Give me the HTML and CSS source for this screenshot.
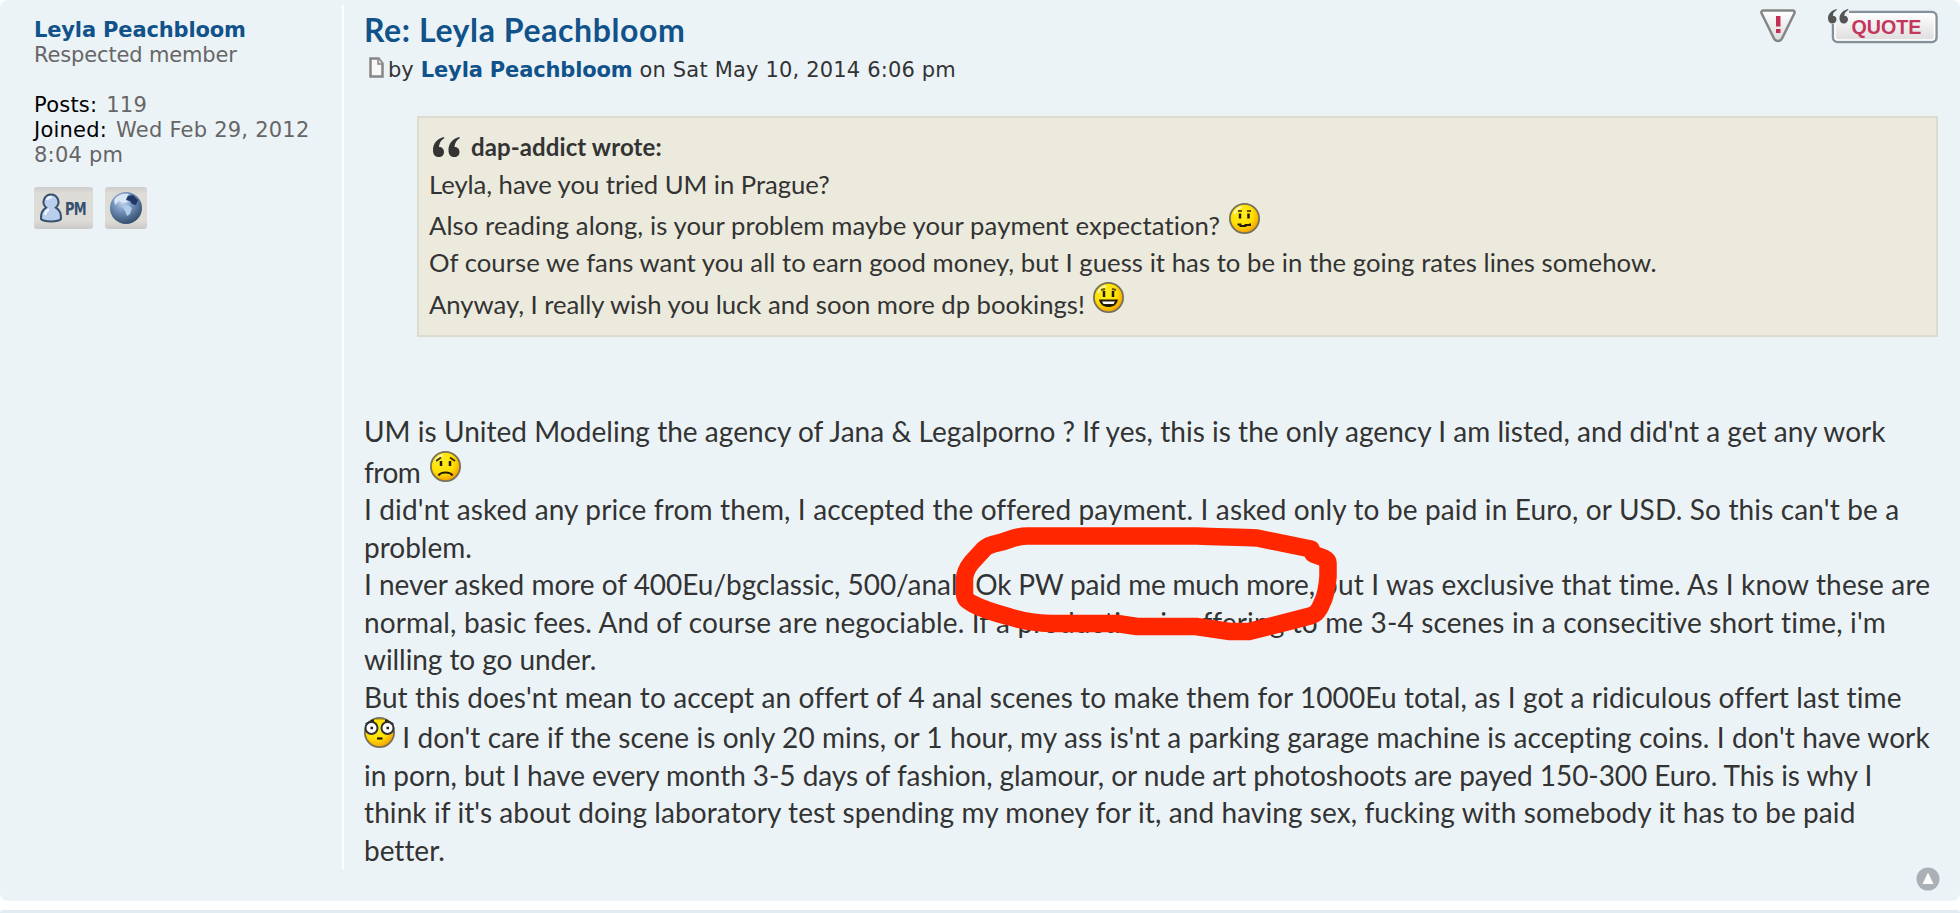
FILE: index.html
```html
<!DOCTYPE html>
<html lang="en">
  <head>
    <meta charset="UTF-8" />
    <meta name="viewport" content="width=device-width, initial-scale=1.0" />
    <title>Re: Leyla Peachbloom</title>
    <link rel="stylesheet" href="styles.css">
  </head>
  <body>
    <!-- shared smiley parts -->
    <svg class="defs" width="0" height="0">
      <defs>
        <radialGradient id="face" cx="0.4" cy="0.35" r="0.65">
          <stop offset="0" stop-color="#ffee22" />
          <stop offset="0.6" stop-color="#ffe000" />
          <stop offset="1" stop-color="#f5a200" />
        </radialGradient>
        <linearGradient id="button" x1="0" y1="0" x2="0" y2="1">
          <stop offset="0" stop-color="#ffffff" />
          <stop offset="1" stop-color="#dcdcdc" />
        </linearGradient>
        <radialGradient id="earth" cx="0.4" cy="0.3" r="0.7">
          <stop offset="0" stop-color="#c9dcf2" />
          <stop offset="0.45" stop-color="#7391ba" />
          <stop offset="1" stop-color="#34506f" />
        </radialGradient>
        <g id="head">
          <circle cx="15.5" cy="15.5" r="14.6" fill="url(#face)" stroke="#77705a" stroke-width="1.8" />
          <path d="M5 11a11.500 11.500 0 0 1 8-7" fill="none" stroke="#fff8b0" stroke-width="2" />
        </g>
      </defs>
    </svg>

    <div class="post">
      <div class="inner">
        <aside class="profile">
          <a class="user" href="#">Leyla Peachbloom</a>
          <div class="rank">Respected member</div>
          <dl class="stats">
            <div><dt>Posts:</dt> <dd>119</dd></div>
            <div><dt>Joined:</dt> <dd>Wed Feb 29, 2012<br>8:04 pm</dd></div>
          </dl>
          <div class="contact">
            <a class="contact-btn pm" href="#">
              <svg width="24" height="32" viewBox="0 0 24 32">
                <path d="M12 2.500a7.500 7.500 0 0 1 4.800 13.200c3.500 2 5.400 6.500 5.200 11.300-2.800 3.200-17 3.200-20 0-.2-4.800 1.700-9.300 5.200-11.300A7.500 7.500 0 0 1 12 2.500z" fill="#b9cfec" stroke="#36506f" stroke-width="2" />
                <path d="M8 8a5 5 0 0 1 5-3M6 23c.5-3 2-5 4-5.500" fill="none" stroke="#eef5ff" stroke-width="2.500" />
              </svg>
              <span>PM</span>
            </a>
            <a class="contact-btn www" href="#">
              <svg width="34" height="34" viewBox="0 0 34 34">
                <circle cx="17" cy="17" r="16" fill="url(#earth)" />
                <path d="M5 9c4-6 10-7 15-6l-3 4 2 4-5 1-4-2-4 4z" fill="#d8e6f6" />
                <path d="M19 5l5-1 5 5-2 5-4-1-2-3-4-1z" fill="#1f3868" />
                <path d="M13 15l6-1 4 3-2 6-3 2-2-5z" fill="#b3cbea" />
              </svg>
            </a>
          </div>
        </aside>

        <div class="postbody">
          <div class="post-head">
            <div>
              <h3><a href="#">Re: Leyla Peachbloom</a></h3>
              <p class="author">
                <svg width="17" height="21" viewBox="0 0 17 21">
                  <path d="M2.500 1.500h8l4 5v13h-12z" fill="#f8f8f8" stroke="#868686" stroke-width="2.500" />
                  <path d="M10 1.500v5.500h4.500" fill="#ddd" stroke="#868686" stroke-width="1.500" />
                </svg>
                <span>by</span>
                <a class="user" href="#">Leyla Peachbloom</a>
                <span class="date">on Sat May 10, 2014 6:06 pm</span>
              </p>
            </div>
            <div class="actions">
              <svg width="36" height="34" viewBox="0 0 36 34">
                <path d="M3 1.500h30c1.500 0 2 1.500 1.300 3L22 29.500c-1.500 3.200-6.500 3.200-8 0L1.700 4.500C1 3 1.500 1.500 3 1.500z" fill="url(#button)" stroke="#858585" stroke-width="2.500" />
                <path d="M16 7h4.500v10.500H16zM16 20h4.500v4H16z" fill="#c22f55" />
              </svg>
              <svg class="quote-btn" width="111" height="36" viewBox="0 0 111 36">
                <rect x="6" y="3" width="103.500" height="30" rx="4.500" fill="url(#button)" stroke="#84909a" stroke-width="2.500" />
                <rect x="8" y="5" width="99.500" height="26" rx="3" fill="none" stroke="#fff" stroke-width="1.500" />
                <path d="M0 0h22v15H0z" fill="#ecf3f7" />
                <path id="tick" d="M9.500 0C4 1.500 1 5 1 9.500 1 12.500 2.800 14.500 5.300 14.500s4.200-1.700 4.200-4-1.500-3.700-3.700-3.700C6 4 7.500 2 10 1z" fill="#555" />
                <use href="#tick" x="11.500" />
                <text x="24.500" y="25" textLength="70" lengthAdjust="spacingAndGlyphs">QUOTE</text>
              </svg>
            </div>
          </div>

          <blockquote>
            <cite>
              <svg width="29" height="22" viewBox="0 0 29 22">
                <path id="mark" d="M11.500 1C4.500 3 1 8 1 14c0 4.500 2 7 5.700 7 3.300 0 5.300-2 5.300-5s-2-5-5-5c.2-4 2-7 5.500-9z" fill="#343434" />
                <use href="#mark" x="15.500" />
              </svg>dap-addict wrote:</cite>
            <span class="line">Leyla, have you tried UM in Prague?</span>
            <span class="line q2">Also reading along, is your problem maybe your payment expectation?
              <svg class="smiley" width="31" height="31" viewBox="0 0 31 31">
                <use href="#head" />
                <path d="M9 8h4M18 8h4" stroke="#6b5200" stroke-width="2" />
                <path d="M11 10.500v5M19.500 10.500v5" stroke="#221a00" stroke-width="2.500" />
                <path d="M8.500 21.500h3v1.500h5v-1h4.500v-1.500" fill="none" stroke="#221a00" stroke-width="2" />
              </svg>
            </span>
            <span class="line q3">Of course we fans want you all to earn good money, but I guess it has to be in the going rates lines somehow.</span>
            <span class="line q4">Anyway, I really wish you luck and soon more dp bookings!
              <svg class="smiley" width="31" height="31" viewBox="0 0 31 31">
                <use href="#head" />
                <path d="M8 8l4-1M19 7l4 1" stroke="#6b5200" stroke-width="2" />
                <path d="M11 9v6M20 9v6" stroke="#221a00" stroke-width="2.500" />
                <path d="M6 17.500h19c-1 5-4.500 7.500-9.500 7.500S7 22.500 6 17.500z" fill="#221a00" />
                <path d="M9 19.500h13l-1.500 2.500h-10z" fill="#fff" />
              </svg>
            </span>
          </blockquote>

          <div class="content">
            <span class="line l1">UM is United Modeling the agency of Jana &amp; Legalporno ? If yes, this is the only agency I am listed, and did'nt a get any work</span>
            <span class="line l2">from
              <svg class="smiley sad" width="31" height="31" viewBox="0 0 31 31">
                <use href="#head" />
                <path d="M6 10l5-3.500M20 6.500l5 3.500" stroke="#3d2f00" stroke-width="2" />
                <path d="M11 10v5M20 10v5" stroke="#221a00" stroke-width="2.500" />
                <path d="M8.500 24.500c1.500-2.500 4-3 7-3s5.500.5 7 3" fill="none" stroke="#221a00" stroke-width="2.200" />
              </svg>
            </span>
            <span class="line l3">I did'nt asked any price from them, I accepted the offered payment. I asked only to be paid in Euro, or USD. So this can't be a</span>
            <span class="line">problem.</span>
            <span class="line l5"><span class="fees">I never asked more of 400Eu/bgclassic, 500/anal. </span><span class="circled">Ok PW paid me much more,</span> but I was exclusive that time. As I know these are</span>
            <span class="line l6">normal, basic fees. And of course are negociable. If a production is offering to me 3-4 scenes in a consecitive short time, i'm</span>
            <span class="line l7">willing to go under.</span>
            <span class="line l8">But this does'nt mean to accept an offert of 4 anal scenes to make them for 1000Eu total, as I got a ridiculous offert last time</span>
            <span class="line l9"><svg class="smiley" width="31" height="31" viewBox="0 0 31 31">
                <use href="#head" />
                <path d="M2 7.500l7-3.500h13l7 3.500" fill="none" stroke="#1e1e1e" stroke-width="3" />
                <path d="M10 4.500h11" stroke="#ffe000" stroke-width="4" />
                <circle cx="7.500" cy="11" r="6" fill="#fff" stroke="#333" stroke-width="2" />
                <circle cx="23.500" cy="11" r="6" fill="#fff" stroke="#333" stroke-width="2" />
                <path d="M6.500 11h2.500M22.500 11h2.500" stroke="#222" stroke-width="2.500" />
                <path d="M13 21.500h5.500" stroke="#221a00" stroke-width="2.200" />
              </svg>
              I don't care if the scene is only 20 mins, or 1 hour, my ass is'nt a parking garage machine is accepting coins. I don't have work</span>
            <span class="line l10">in porn, but I have every month 3-5 days of fashion, glamour, or nude art photoshoots are payed 150-300 Euro. This is why I</span>
            <span class="line l11">think if it's about doing laboratory test spending my money for it, and having sex, fucking with somebody it has to be paid</span>
            <span class="line">better.</span>
          </div>
        </div>
      </div>

      <a class="top" href="#">
        <svg width="24" height="24" viewBox="0 0 24 24">
          <circle cx="12" cy="12" r="11.500" fill="#aab0b5" />
          <path d="M12 5.500l5.500 11.500h-11z" fill="#fff" />
        </svg>
      </a>

      <!-- marker stroke drawn over the text -->
      <svg class="marker" width="390" height="120" viewBox="950 522 390 120">
        <path d="M1027 536H1197C1220 537 1240 537 1257 538L1311 549 1313 554C1322 557 1328 559 1328 563V577C1327 588 1326 596 1322 603 1319 611 1316 615 1310 616L1283 623 1249 631.500H1230L1196 626.500H1137L1117 623.500H1050C1035 623 1023 621 1010 617 995 613 984 610 973 604 966 600 965 599 964.500 594V579C965 570 969 566 972 562L984 549C988 545 993 544 998 543 1008 541 1014 536 1027 536Z" />
      </svg>
    </div>
    <div class="post next"></div>
  </body>
</html>
```
FILE: styles.css
```css
:root {
  --post-bg: #ecf3f7;
  --link: #105289;
  --text: #333;
}

html,
body {
  margin: 0;
  padding: 0;
}

body {
  color: var(--text);
  background-color: #fff;
  font-family: "DejaVu Sans", Verdana, sans-serif;
  font-size: 21px;
}

a {
  color: var(--link);
  text-decoration: none;
}

svg {
  flex: none;
}

.defs {
  position: absolute;
}

.post {
  position: relative;
  box-sizing: border-box;
  height: 901px;
  padding-top: 5px;
  border-radius: 8px;
  background-color: var(--post-bg);
}

.next {
  height: 3px;
  margin-top: 9px;
  padding: 0;
  border-radius: 8px 8px 0 0;
  background-color: #e1ebf2;
}

.inner {
  display: grid;
  grid-template-columns: 342px 1fr;
  height: 862px;
}

/* left column */
.profile {
  padding: 13px 0 0 34px;
  line-height: 25px;
  color: #666;
}

.user {
  font-weight: bold;
  letter-spacing: -0.15px;
}

.rank {
  letter-spacing: -0.15px;
}

.stats {
  margin: 25px 0 19px;
  letter-spacing: 0.23px;
}

.stats dt,
.stats dd {
  display: inline;
  margin: 0;
}

.stats dt {
  margin-right: 2px;
  color: #000;
}

.contact {
  display: flex;
  gap: 12px;
}

.contact-btn {
  display: flex;
  align-items: center;
  justify-content: center;
  height: 42px;
  border-radius: 3px;
  background: linear-gradient(#ccc, #dedcd6 15%, #dedcd6 80%, #c9c9c9);
}

.pm {
  width: 59px;
  gap: 2px;
  color: #36506f;
  font: bold 18px "DejaVu Sans Condensed", "DejaVu Sans", sans-serif;
}

.pm span {
  width: 23px;
  letter-spacing: -1px;
  transform: scaleX(0.8);
  transform-origin: left;
}

.www {
  width: 42px;
}

/* right column */
.postbody {
  padding: 4px 22px 0 20px;
  border-left: 2px solid #fff;
}

.post-head {
  display: flex;
  justify-content: space-between;
}

h3 {
  margin: 1px 0 6px;
  font: bold 32px/40px Lato, "Trebuchet MS", sans-serif;
  letter-spacing: 0.6px;
}

.author {
  display: flex;
  margin: 0;
  line-height: 28px;
}

.author svg {
  margin: 1px 3px 0 4px;
}

.author .user {
  margin: 0 7px 0 7px;
}

.date {
  letter-spacing: 0.17px;
}

.actions {
  display: flex;
  gap: 31px;
}

.quote-btn text {
  fill: #c4365c;
  font: bold 20px "Liberation Sans", Arial, sans-serif;
}

blockquote {
  margin: 32px 0 76px 53px;
  padding: 10px 10px 12px;
  border: 2px solid #dbdbce;
  background-color: #ebeadd;
  font: 25.7px/37.5px Lato, "Trebuchet MS", sans-serif;
  letter-spacing: -0.05px;
}

cite {
  display: flex;
  align-items: center;
  gap: 10px;
  padding-left: 3px;
  font-size: 24px;
  font-style: normal;
  font-weight: bold;
  letter-spacing: 0.1px;
}

.line {
  display: block;
  white-space: nowrap;
}

.q2 {
  letter-spacing: 0.09px;
}

.q3 {
  letter-spacing: 0.04px;
}

.q4 {
  letter-spacing: -0.03px;
}

.content {
  font: 28px/37.5px Lato, "Trebuchet MS", sans-serif;
  font-variant-ligatures: none;
}

.smiley {
  margin: 0.5px 0 0 1px;
  vertical-align: 0.5px;
}

blockquote .smiley {
  margin: 0.3px 0 0 2px;
}

.sad {
  margin-left: 3px;
}

.l9 .smiley {
  margin-left: 0;
}

/* tracking keeps each line at its set width */
.l1 {
  letter-spacing: 0.03px;
}

.l2 {
  letter-spacing: -0.5px;
}

.l3,
.l6 {
  letter-spacing: 0.14px;
}

.l5 {
  letter-spacing: 0.15px;
}

.fees {
  letter-spacing: -0.03px;
}

.circled {
  margin-left: 4px;
  letter-spacing: -0.22px;
}

.l7 {
  letter-spacing: -0.07px;
}

.l8 {
  letter-spacing: 0.1px;
}

.l9 {
  letter-spacing: 0.08px;
}

.l10 {
  letter-spacing: -0.06px;
}

.l11 {
  letter-spacing: 0.09px;
}

.top {
  display: flex;
  justify-content: flex-end;
  padding: 0 20px 0 0;
}

.marker {
  position: absolute;
  left: 950px;
  top: 522px;
}

.marker path {
  fill: none;
  stroke: #ff2600;
  stroke-width: 17.5;
  stroke-linejoin: round;
}
```
